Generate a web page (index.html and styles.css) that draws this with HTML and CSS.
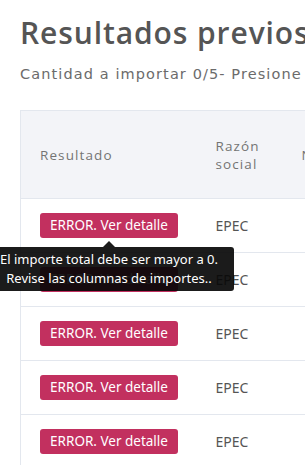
FILE: index.html
```html
<!DOCTYPE html>
<html lang="es">
<head>
<meta charset="utf-8">
<link rel="stylesheet" href="styles.css">
</head>
<body>
<div class="page">
  <h1 class="title">Resultados previos</h1>
  <p class="subtitle">Cantidad a importar 0/5- Presione importar para continuar</p>
  <div class="table-wrap">
    <table class="results">
      <colgroup>
        <col class="c1"><col class="c2"><col class="c3">
      </colgroup>
      <thead>
        <tr><th>Resultado</th><th>Razón social</th><th>Número</th></tr>
      </thead>
      <tbody>
        <tr><td><span class="badge has-tip">ERROR. Ver detalle<span class="tip">El importe total debe ser mayor a 0.<br>Revise las columnas de importes..</span></span></td><td>EPEC</td><td></td></tr>
        <tr><td><span class="badge">ERROR. Ver detalle</span></td><td>EPEC</td><td></td></tr>
        <tr><td><span class="badge">ERROR. Ver detalle</span></td><td>EPEC</td><td></td></tr>
        <tr><td><span class="badge">ERROR. Ver detalle</span></td><td>EPEC</td><td></td></tr>
        <tr><td><span class="badge">ERROR. Ver detalle</span></td><td>EPEC</td><td></td></tr>
      </tbody>
    </table>
  </div>
</div>
</body>
</html>
```
FILE: styles.css
```css
html, body { margin: 0; padding: 0; background: #fff; overflow: hidden; }
body { width: 305px; height: 465px; }
.page { padding: 15px 0 0 20px; font-family: "Open Sans", "Noto Sans", sans-serif; white-space: nowrap; }
.title { margin: 0; font-size: 30px; font-weight: 600; color: #555; line-height: 36px; letter-spacing: 0.9px; }
.subtitle { margin: 13px 0 0; font-family: "DejaVu Sans", sans-serif; font-size: 14.5px; color: #6b6b6b; line-height: 20px; letter-spacing: 1.1px; }
.table-wrap { margin-top: 26px; }
.results { border-collapse: collapse; table-layout: fixed; width: 420px; border-left: 1px solid #e3e7ee; border-top: 1px solid #e3e7ee; }
.c1 { width: 176px; }
.c2 { width: 86px; }
.c3 { width: 158px; }
thead th { background: #f3f4f8; height: 87px; padding: 0 19px; text-align: left; font-weight: 500; font-size: 13.5px; color: #747474; letter-spacing: 1.1px; line-height: 18px; white-space: normal; border-bottom: 1px solid #e3e7ee; }
tbody td { height: 53px; padding: 0 19px; border-bottom: 1px solid #e3e7ee; font-family: "Noto Sans", sans-serif; font-size: 14px; color: #555; vertical-align: middle; }
.badge { position: relative; display: inline-block; background: #c2305f; color: #fff; font-family: "Noto Sans", sans-serif; font-size: 13.5px; line-height: 25px; height: 25px; width: 138px; text-align: center; border-radius: 3px; box-sizing: border-box; }
.tip { position: absolute; top: 34px; left: 50%; transform: translateX(-50%); width: 250px; box-sizing: border-box; padding: 3px 6px; background: rgba(8, 8, 8, 0.92); color: #fff; border-radius: 3px; font-size: 13px; line-height: 19px; text-align: center; white-space: nowrap; z-index: 2; }
.tip::before { content: ""; position: absolute; top: -6px; left: 50%; margin-left: -6px; border-left: 6px solid transparent; border-right: 6px solid transparent; border-bottom: 6px solid rgba(8, 8, 8, 0.92); }
```
